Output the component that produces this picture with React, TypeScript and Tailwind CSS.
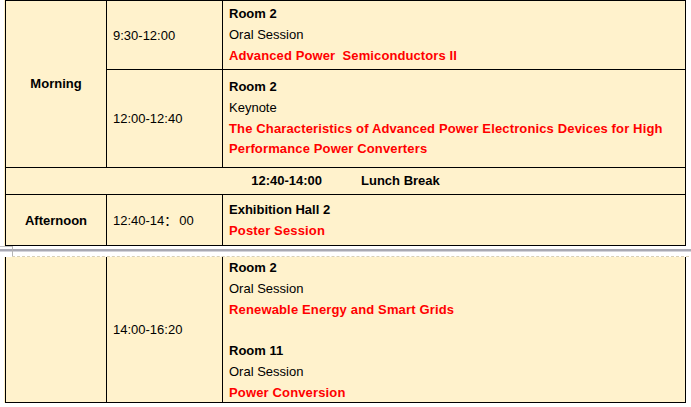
export default function App() {
  return (
    <div className="w-[691px] h-[407px] bg-white overflow-hidden font-['Liberation_Sans','Noto_Sans_CJK_SC',sans-serif] text-[13px] leading-[20.75px] text-black">
      {/* upper part of the table */}
      <div className="ml-[4px] w-[682px] border-l border-[#fff2cc]">
        <div className="grid grid-cols-[100px_115px_462px] grid-rows-[68px_97px_26px_50px] gap-px bg-black p-px">
          <div className="row-span-2 bg-[#fff2cc] flex items-center justify-center font-bold">Morning</div>
          <div className="bg-[#fff2cc] flex items-center pl-[6px] pt-[2px]">9:30-12:00</div>
          <div className="bg-[#fff2cc] pl-[6px] pt-[3px]">
            <div className="font-bold">Room 2</div>
            <div>Oral Session</div>
            <div className="font-bold text-[#ff0000] tracking-[0.1px]">Advanced Power&nbsp; Semiconductors II</div>
          </div>
          <div className="bg-[#fff2cc] flex items-center pl-[6px] pt-[2px]">12:00-12:40</div>
          <div className="bg-[#fff2cc] pl-[6px] pt-[7px]">
            <div className="font-bold">Room 2</div>
            <div>Keynote</div>
            <div className="font-bold text-[#ff0000] whitespace-nowrap tracking-[0.14px]">
              The Characteristics of Advanced Power Electronics Devices for High
              <br />
              Performance Power Converters
            </div>
          </div>
          <div className="col-span-3 bg-[#fff2cc] flex items-center justify-center gap-[39px] font-bold">
            <span>12:40-14:00</span>
            <span>Lunch Break</span>
          </div>
          <div className="bg-[#fff2cc] flex items-center justify-center font-bold pt-[2px]">Afternoon</div>
          <div className="bg-[#fff2cc] flex items-center pl-[6px] pt-[2px]">
            <span>12:40-14</span>
            <span className="inline-block w-[15px]">：</span>
            <span>00</span>
          </div>
          <div className="bg-[#fff2cc] pl-[6px] pt-[5px]">
            <div className="font-bold">Exhibition Hall 2</div>
            <div className="font-bold text-[#ff0000] tracking-[0.15px]">Poster Session</div>
          </div>
        </div>
      </div>

      {/* page break */}
      <div className="relative h-[11px] flex flex-col">
        <div className="h-[3px]" />
        <div className="h-[2px] bg-[#a9a9b3]" />
        <div className="h-px bg-[#d3d3da]" />
        <div className="h-[4px]" />
        <div className="ml-[12px] mr-[2px] border-t border-dashed border-[#d8d0b6]" />
        <div className="absolute left-0 top-0 w-[12px] h-px bg-[#c4c4c4]" />
        <div className="absolute left-[12px] top-0 w-px h-[10px] bg-[#b4b4b4]" />
      </div>

      {/* continuation of the table */}
      <div className="ml-[4px] w-[682px] border-l border-[#fff2cc]">
        <div className="grid grid-cols-[100px_115px_462px] grid-rows-[145px] gap-px bg-black px-px pb-px">
          <div className="bg-[#fff2cc]" />
          <div className="bg-[#fff2cc] flex items-center pl-[6px] pt-[2px]">14:00-16:20</div>
          <div className="bg-[#fff2cc] pl-[6px] pt-px overflow-hidden">
            <div className="font-bold">Room 2</div>
            <div>Oral Session</div>
            <div className="font-bold text-[#ff0000] tracking-[0.15px]">Renewable Energy and Smart Grids</div>
            <div className="h-[20.75px]" />
            <div className="font-bold">Room 11</div>
            <div>Oral Session</div>
            <div className="font-bold text-[#ff0000] tracking-[0.15px]">Power Conversion</div>
          </div>
        </div>
      </div>
    </div>
  );
}
